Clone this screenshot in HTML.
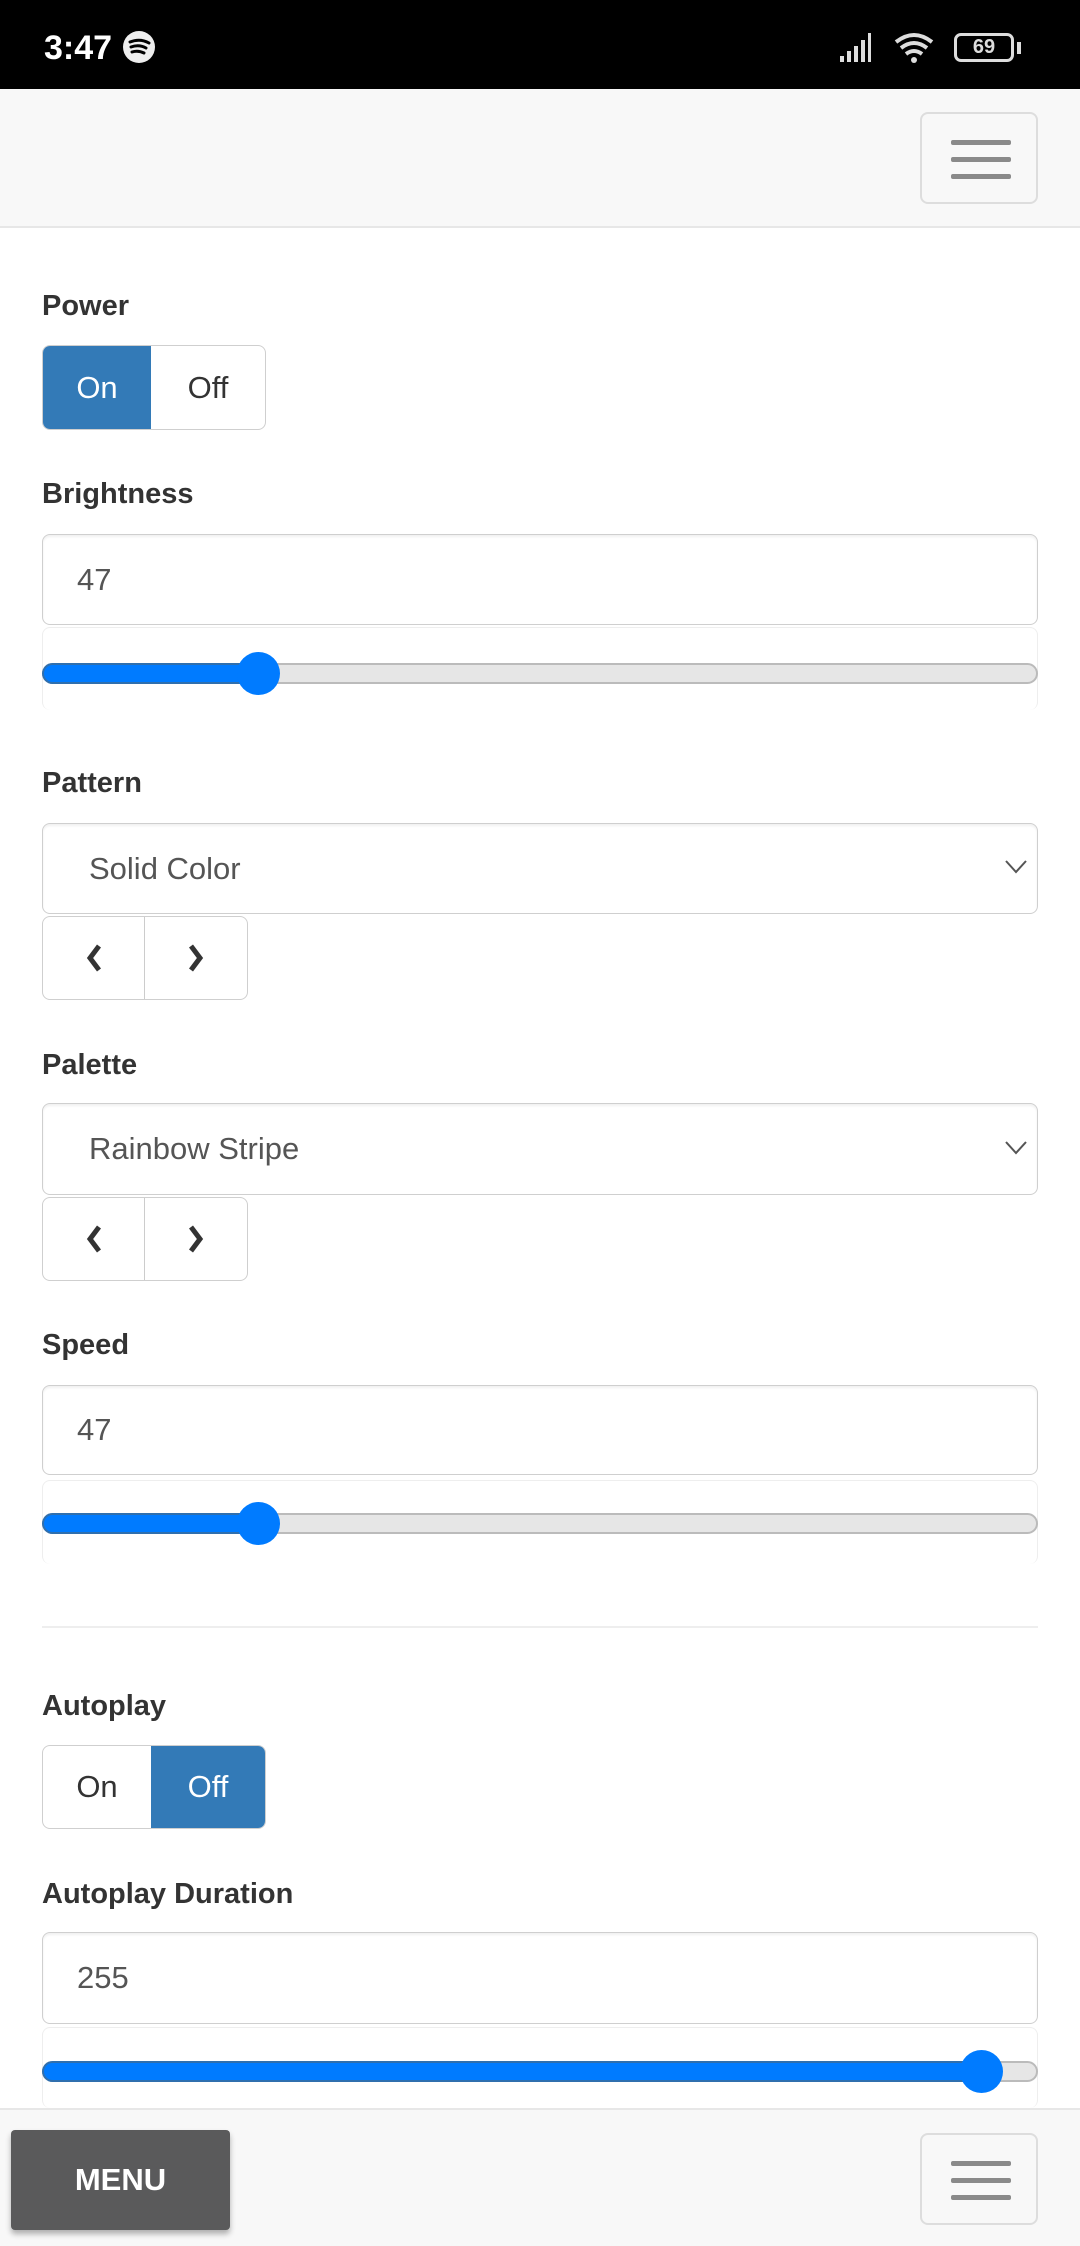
<!DOCTYPE html>
<html><head><meta charset="utf-8"><style>
*{box-sizing:border-box;margin:0;padding:0}
body{width:1080px;height:2246px;background:#fff;font-family:"Liberation Sans",Arial,sans-serif;color:#333;position:relative;overflow:hidden}
.a{position:absolute}
.lbl{position:absolute;left:42px;font-weight:bold;font-size:29px;line-height:34px;color:#333}
.inp{position:absolute;left:42px;width:996px;border:1.5px solid #cfcfcf;border-radius:8px;background:#fff;font-size:31px;color:#555;padding-left:34px;display:flex;align-items:center;box-shadow:inset 0 2px 2px rgba(0,0,0,.06)}
.sbox{position:absolute;left:42px;width:996px;border:1px solid #eee;border-radius:8px;border-bottom:none;background:#fff}
.track{position:absolute;left:42px;width:996px;height:21px;border:2px solid #bbb;border-radius:11px;background:#e6e6e6}
.fill{position:absolute;left:42px;height:21px;background:#007bff;border-radius:11px 0 0 11px;border:2px solid #2f6fae;border-right:none}
.thumb{position:absolute;width:43px;height:43px;border-radius:50%;background:#007bff}
.grp{position:absolute;left:42px;display:flex;border:1.5px solid #cfcfcf;border-radius:8px;overflow:hidden;background:#fff}
.grp div{display:flex;align-items:center;justify-content:center;font-size:31px;color:#333}
.act{background:#337ab7;color:#fff!important}
.ham{position:absolute;left:920px;width:118px;height:92px;border:2px solid #ddd;border-radius:8px}
.ham i{position:absolute;left:29px;width:60px;height:5px;background:#8a8a8a;border-radius:2px}
</style></head><body>
<div class="a" style="left:0;top:0;width:1080px;height:89px;background:#000"></div>
<div class="a" style="left:44px;top:28px;color:#fff;font-weight:bold;font-size:34px;line-height:40px">3:47</div>
<svg class="a" style="left:122px;top:30px" width="34" height="34" viewBox="0 0 34 34"><circle cx="17" cy="17" r="16" fill="#eee"/><path d="M8 12q10-4 19 1M9 17q8-3 15 1M10 22q6-2 12 1" stroke="#000" stroke-width="3" fill="none" stroke-linecap="round"/></svg>
<svg class="a" style="left:838px;top:32px" width="42" height="30"><path d="M2 30h4v-6h-4zM9 30h4v-11h-4zM16 30h4v-16h-4zM23 30h4v-22h-4zM30 30h3v-29h-3z" fill="#ddd"/></svg>
<svg class="a" style="left:894px;top:32px" width="40" height="34"><path d="M2 10q18-14 36 0M7 16q13-10 26 0M12 22q8-6 16 0" stroke="#ddd" stroke-width="4" fill="none"/><circle cx="20" cy="28" r="3" fill="#ddd"/></svg>
<div class="a" style="left:954px;top:33px;width:60px;height:29px;border:3px solid #ddd;border-radius:7px;color:#ddd;font-size:20px;font-weight:bold;text-align:center;line-height:23px">69</div>
<div class="a" style="left:1017px;top:42px;width:4px;height:12px;background:#ddd"></div>

<div class="a" style="left:0;top:89px;width:1080px;height:139px;background:#f8f8f8;border-bottom:2px solid #e7e7e7"></div>
<div class="ham" style="top:112px"><i style="top:26px"></i><i style="top:43px"></i><i style="top:60px"></i></div>

<div class="lbl" style="top:289px">Power</div>
<div class="grp" style="top:345px;height:85px"><div class="act" style="width:108px">On</div><div style="width:114px">Off</div></div>

<div class="lbl" style="top:477px">Brightness</div>
<div class="inp" style="top:534px;height:91px">47</div>
<div class="sbox" style="top:627px;height:83px"></div>
<div class="track" style="top:663px"></div><div class="fill" style="top:663px;width:230px"></div><div class="thumb" style="left:237px;top:652px"></div>

<div class="lbl" style="top:766px">Pattern</div>
<div class="inp" style="top:823px;height:91px;padding-left:46px">Solid Color</div>
<svg class="a" style="left:1005px;top:860px" width="22" height="14"><path d="M1 1l10 11 10-11" stroke="#555" stroke-width="2" fill="none"/></svg>
<div class="grp" style="top:916px;height:84px"><div style="width:102px;border-right:1px solid #ccc"><svg width="20" height="30"><path d="M15 3L6 15l9 12" stroke="#333" stroke-width="5" fill="none"/></svg></div><div style="width:102px"><svg width="20" height="30"><path d="M5 3l9 12-9 12" stroke="#333" stroke-width="5" fill="none"/></svg></div></div>

<div class="lbl" style="top:1048px">Palette</div>
<div class="inp" style="top:1103px;height:92px;padding-left:46px">Rainbow Stripe</div>
<svg class="a" style="left:1005px;top:1141px" width="22" height="14"><path d="M1 1l10 11 10-11" stroke="#555" stroke-width="2" fill="none"/></svg>
<div class="grp" style="top:1197px;height:84px"><div style="width:102px;border-right:1px solid #ccc"><svg width="20" height="30"><path d="M15 3L6 15l9 12" stroke="#333" stroke-width="5" fill="none"/></svg></div><div style="width:102px"><svg width="20" height="30"><path d="M5 3l9 12-9 12" stroke="#333" stroke-width="5" fill="none"/></svg></div></div>

<div class="lbl" style="top:1328px">Speed</div>
<div class="inp" style="top:1385px;height:90px">47</div>
<div class="sbox" style="top:1480px;height:84px"></div>
<div class="track" style="top:1513px"></div><div class="fill" style="top:1513px;width:230px"></div><div class="thumb" style="left:237px;top:1502px"></div>

<div class="a" style="left:42px;top:1626px;width:996px;height:2px;background:#eee"></div>

<div class="lbl" style="top:1689px">Autoplay</div>
<div class="grp" style="top:1745px;height:84px"><div style="width:108px">On</div><div class="act" style="width:114px">Off</div></div>

<div class="lbl" style="top:1877px">Autoplay Duration</div>
<div class="inp" style="top:1932px;height:92px">255</div>
<div class="sbox" style="top:2027px;height:81px"></div>
<div class="track" style="top:2061px"></div><div class="fill" style="top:2061px;width:940px"></div><div class="thumb" style="left:960px;top:2050px"></div>

<div class="a" style="left:0;top:2108px;width:1080px;height:138px;background:#f8f8f8;border-top:2px solid #e7e7e7"></div>
<div class="a" style="left:11px;top:2130px;width:219px;height:100px;background:#5a5a5b;border-radius:4px;box-shadow:0 4px 6px rgba(0,0,0,.3);color:#fff;font-size:31px;font-weight:bold;display:flex;align-items:center;justify-content:center">MENU</div>
<div class="ham" style="top:2133px"><i style="top:26px"></i><i style="top:43px"></i><i style="top:60px"></i></div>
</body></html>
